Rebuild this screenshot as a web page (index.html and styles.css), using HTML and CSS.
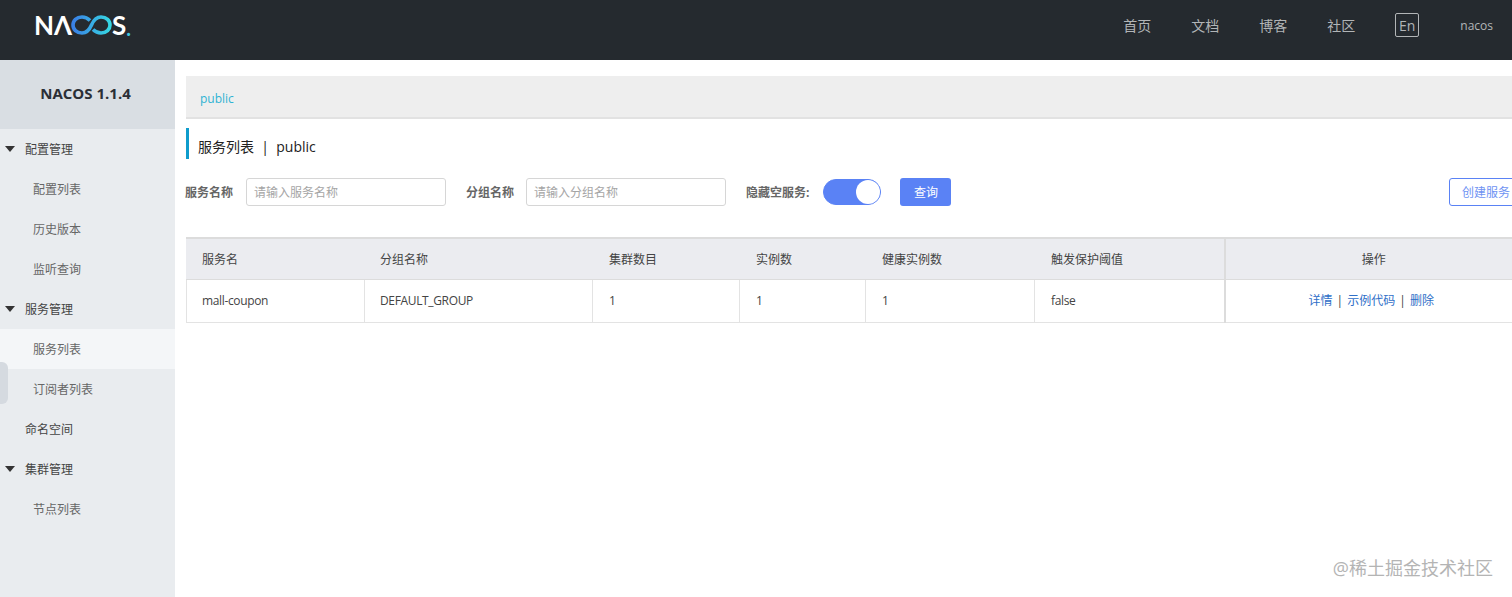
FILE: index.html
```html
<!DOCTYPE html>
<html>
<head>
    <title>Nacos</title>
    <link rel="stylesheet" href="styles.css">
</head>
<body>
    <header class="topbar">
        <div class="logo">
            <span>NΛ</span>
            <svg class="logo-mark" width="41" height="20" viewBox="0 0 41 20">
                <defs>
                    <linearGradient id="logoGrad" x1="0" y1="0" x2="1" y2="0">
                        <stop offset="0" stop-color="#3a80e6"/>
                        <stop offset="1" stop-color="#36d6e2"/>
                    </linearGradient>
                </defs>
                <path d="M19 5.500C16.500 3 14 2 11 2C5.500 2 2 5.500 2 10C2 14.500 5.500 18 11 18C16.500 18 19 13.500 20.500 10C22 6.500 24.500 2 30 2C35.500 2 39 5.500 39 10C39 14.500 35.500 18 30 18C27 18 24.500 17 22 14.500" fill="none" stroke="url(#logoGrad)" stroke-width="3.6"/>
            </svg>
            <span>S</span><span class="logo-dot">.</span>
        </div>
        <nav class="topnav">
            <a>首页</a>
            <a>文档</a>
            <a>博客</a>
            <a>社区</a>
            <a class="lang">En</a>
            <a class="user">nacos</a>
        </nav>
    </header>

    <div class="page">
        <aside class="sidebar">
            <div class="side-title">NACOS 1.1.4</div>
            <ul class="menu">
                <li class="group"><i class="caret"></i>配置管理</li>
                <li class="sub">配置列表</li>
                <li class="sub">历史版本</li>
                <li class="sub">监听查询</li>
                <li class="group"><i class="caret"></i>服务管理</li>
                <li class="sub active">服务列表</li>
                <li class="sub">订阅者列表</li>
                <li class="group">命名空间</li>
                <li class="group"><i class="caret"></i>集群管理</li>
                <li class="sub">节点列表</li>
            </ul>
            <div class="side-handle"></div>
        </aside>

        <main class="content">
            <div class="crumb"><span>public</span></div>
            <h1 class="page-title">服务列表 &nbsp;|&nbsp; public</h1>

            <div class="toolbar">
                <label class="field-label">服务名称</label>
                <input class="field" type="text" placeholder="请输入服务名称">
                <label class="field-label second">分组名称</label>
                <input class="field" type="text" placeholder="请输入分组名称">
                <label class="field-label third">隐藏空服务:</label>
                <div class="toggle"><span class="knob"></span></div>
                <button class="btn-primary">查询</button>
                <button class="btn-outline">创建服务</button>
            </div>

            <table class="grid">
                <colgroup>
                    <col class="c1"><col class="c2"><col class="c3"><col class="c4"><col class="c5"><col class="c6"><col class="c7">
                </colgroup>
                <thead>
                    <tr>
                        <th>服务名</th>
                        <th>分组名称</th>
                        <th>集群数目</th>
                        <th>实例数</th>
                        <th>健康实例数</th>
                        <th>触发保护阈值</th>
                        <th class="center">操作</th>
                    </tr>
                </thead>
                <tbody>
                    <tr>
                        <td>mall-coupon</td>
                        <td>DEFAULT_GROUP</td>
                        <td>1</td>
                        <td>1</td>
                        <td>1</td>
                        <td>false</td>
                        <td class="center ops"><a>详情</a> | <a>示例代码</a> | <a>删除</a></td>
                    </tr>
                </tbody>
            </table>
        </main>
    </div>

    <div class="watermark">@稀土掘金技术社区</div>
</body>
</html>
```

FILE: styles.css
```css
* {
    box-sizing: border-box;
}
html, body {
    height: 100%;
}
body {
    margin: 0;
    overflow: hidden;
    font-family: "Open Sans", "Noto Sans CJK SC", sans-serif;
    font-size: 12px;
    color: #333;
    background: #fff;
}

/* top bar */
.topbar {
    height: 60px;
    background: #252a2f;
    display: flex;
    align-items: center;
    justify-content: space-between;
    padding: 0 19px 0 34px;
}
.logo {
    display: flex;
    align-items: center;
    height: 50px;
    margin-top: -10px;
    color: #fff;
    font-family: "Lato", sans-serif;
    font-size: 26px;
    font-weight: 700;
}
.logo-mark {
    margin: 0 0 0 -1px;
}
.logo-dot {
    color: #3ec6e0;
    font-size: 20px;
    margin-top: 5px;
}
.topnav {
    display: flex;
    align-items: center;
    gap: 40px;
    color: #b2b5b7;
    font-size: 14px;
    margin-top: -10px;
}
.topnav .lang {
    width: 24px;
    height: 24px;
    border: 1px solid #b2b5b7;
    border-radius: 2px;
    display: flex;
    align-items: center;
    justify-content: center;
}
.topnav .user {
    font-size: 12px;
    margin-left: 1px;
}

/* sidebar */
.page {
    display: flex;
    height: 537px;
}
.sidebar {
    position: relative;
    flex: 0 0 175px;
    background: #e9ecef;
}
.side-title {
    height: 69px;
    background: #d9dee3;
    display: flex;
    align-items: center;
    justify-content: center;
    padding: 0 4px 4px 0;
    font-size: 15px;
    font-weight: 700;
    color: #2b2f36;
}
.menu {
    list-style: none;
    margin: 0;
    padding: 0;
}
.menu li {
    height: 40px;
    line-height: 42px;
    color: #444;
}
.group {
    position: relative;
    padding-left: 25px;
}
.sub {
    padding-left: 33px;
    color: #666 !important;
}
.sub.active {
    background: #f4f6f8;
}
.caret {
    position: absolute;
    left: 5px;
    top: 17px;
    border-left: 5px solid transparent;
    border-right: 5px solid transparent;
    border-top: 6px solid #333;
}
.side-handle {
    position: absolute;
    left: 0;
    top: 302px;
    width: 8px;
    height: 42px;
    background: #d5dae0;
    border-radius: 0 6px 6px 0;
}

/* main */
.content {
    flex: 1;
    min-width: 0;
    padding: 16px 0 0 11px;
}
.crumb {
    width: 1337px;
    height: 43px;
    background: #eee;
    border-bottom: 2px solid #e2e2e2;
    padding-left: 14px;
    line-height: 45px;
    color: #2fb3d3;
}
.page-title {
    margin: 9px 0 0;
    height: 31px;
    line-height: 37px;
    border-left: 3px solid #0e9ccc;
    padding-left: 9px;
    font-size: 14px;
    font-weight: 400;
    color: #222;
}
.toolbar {
    width: 1337px;
    height: 28px;
    margin-top: 19px;
    display: flex;
    align-items: center;
}
.field-label {
    font-weight: 700;
    color: #666;
    margin: 0 13px 0 -1px;
}
.field-label.second {
    margin: 0 12px 0 20px;
}
.field-label.third {
    margin: 0 14px 0 20px;
}
.field {
    width: 200px;
    height: 28px;
    border: 1px solid #d6d6d6;
    border-radius: 3px;
    padding: 0 7px;
    font: inherit;
    outline: none;
}
.field::placeholder {
    color: #a5a5a5;
}
.toggle {
    position: relative;
    width: 58px;
    height: 26px;
    border-radius: 13px;
    background: #5a82f5;
    border: 1px solid #5a82f5;
}
.knob {
    position: absolute;
    right: 0;
    top: 0;
    width: 24px;
    height: 24px;
    border-radius: 50%;
    background: #fff;
}
.btn-primary {
    width: 51px;
    height: 28px;
    margin-left: 19px;
    border: none;
    border-radius: 3px;
    background: #5a82f5;
    color: #fff;
    font: inherit;
}
.btn-outline {
    width: 74px;
    height: 28px;
    margin-left: auto;
    border: 1px solid #5a82f5;
    border-radius: 3px;
    background: #fff;
    color: #6f93f3;
    font: inherit;
}
.grid {
    width: 1337px;
    margin-top: 31px;
    table-layout: fixed;
    border-collapse: collapse;
    border: 1px solid #e3e3e3;
    border-top: 2px solid #dcdcdc;
}
.c1 { width: 178px; }
.c2 { width: 228px; }
.c3 { width: 147px; }
.c4 { width: 126px; }
.c5 { width: 169px; }
.c6 { width: 190px; }
.grid th {
    height: 41px;
    padding: 0 15px;
    background: #ebecf0;
    font-weight: 400;
    text-align: left;
    color: #444;
    border-left: 1px solid #ebecf0;
    border-bottom: 1px solid #dcdcdc;
}
.grid th:last-child, .grid td:last-child {
    border-left: 2px solid #dcdcdc;
}
.grid td {
    height: 43px;
    padding: 0 15px;
    color: #444;
    letter-spacing: -0.35px;
    border-left: 1px solid #e3e3e3;
    border-bottom: 1px solid #e3e3e3;
}
.grid th:nth-child(n+3):nth-child(-n+6), .grid td:nth-child(n+3):nth-child(-n+6) {
    padding-left: 16px;
}
.grid .center {
    text-align: center;
}
.grid td.ops {
    letter-spacing: 0;
    padding: 0 20px 2px 15px;
}
.ops a {
    color: #2f6fc8;
    margin: 0 1px;
}

.watermark {
    position: absolute;
    right: 19px;
    bottom: 18px;
    font-size: 18px;
    line-height: 22px;
    color: #b4b4b4;
}
```
